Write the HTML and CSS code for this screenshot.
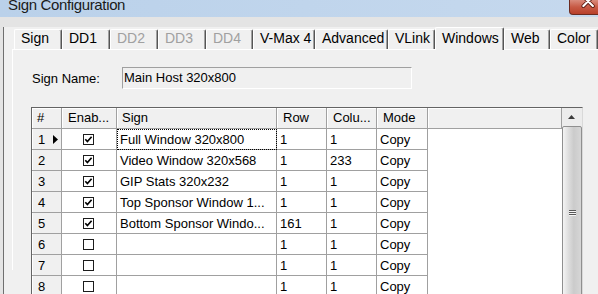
FILE: index.html
```html
<!DOCTYPE html>
<html lang="en">
<head>
    <meta charset="UTF-8">
    <title>Sign Configuration</title>
    <link rel="stylesheet" href="styles.css">
</head>
<body>
    <div class="titlebar">
        <span class="title">Sign Configuration</span>
        <span class="close">
            <svg width="43" height="15" viewBox="0 0 43 15">
                <path d="M14 -4 L24 6 M24 -4 L14 6" stroke="#5a1a10" stroke-width="4" stroke-linecap="round"/>
                <path d="M14 -4 L24 6 M24 -4 L14 6" stroke="#fff" stroke-width="2.2" stroke-linecap="round"/>
            </svg>
        </span>
    </div>

    <div class="frame">
        <div class="tabs">
            <div class="tab" style="width:48px">Sign</div>
            <div class="tab" style="width:48px">DD1</div>
            <div class="tab disabled" style="width:48px">DD2</div>
            <div class="tab disabled" style="width:48px">DD3</div>
            <div class="tab disabled" style="width:47px">DD4</div>
            <div class="tab" style="width:62px">V-Max 4</div>
            <div class="tab" style="width:73px">Advanced</div>
            <div class="tab" style="width:47px">VLink</div>
            <div class="tab selected" style="width:69px">Windows</div>
            <div class="tab" style="width:46px">Web</div>
            <div class="tab" style="width:48px">Color</div>
        </div>

        <div class="panel">
            <div class="name-row">
                <label>Sign Name:</label>
                <div class="textbox">Main Host 320x800</div>
            </div>

            <div class="grid">
                <div class="table">
                    <div class="row head">
                        <div class="cell">#</div>
                        <div class="cell">Enab...</div>
                        <div class="cell">Sign</div>
                        <div class="cell">Row</div>
                        <div class="cell">Colu...</div>
                        <div class="cell">Mode</div>
                        <div class="cell"></div>
                    </div>

                    <div class="row">
                        <div class="cell num">1<svg class="cur" width="5" height="9" viewBox="0 0 5 9"><polygon points="0,0 5,4.5 0,9" fill="#000"/></svg></div>
                        <div class="cell en"><svg class="cb" width="11" height="11" viewBox="0 0 11 11"><rect x="0.5" y="0.5" width="10" height="10" fill="#fff" stroke="#1c1c1c"/><path d="M2.3 5.2 L4.4 7.5 L8.6 2.8" fill="none" stroke="#000" stroke-width="1.7"/></svg></div>
                        <div class="cell focus">Full Window 320x800</div>
                        <div class="cell">1</div>
                        <div class="cell">1</div>
                        <div class="cell">Copy</div>
                        <div class="cell fill"></div>
                    </div>
                    <div class="row">
                        <div class="cell num">2</div>
                        <div class="cell en"><svg class="cb" width="11" height="11" viewBox="0 0 11 11"><rect x="0.5" y="0.5" width="10" height="10" fill="#fff" stroke="#1c1c1c"/><path d="M2.3 5.2 L4.4 7.5 L8.6 2.8" fill="none" stroke="#000" stroke-width="1.7"/></svg></div>
                        <div class="cell">Video Window 320x568</div>
                        <div class="cell">1</div>
                        <div class="cell">233</div>
                        <div class="cell">Copy</div>
                        <div class="cell fill"></div>
                    </div>
                    <div class="row">
                        <div class="cell num">3</div>
                        <div class="cell en"><svg class="cb" width="11" height="11" viewBox="0 0 11 11"><rect x="0.5" y="0.5" width="10" height="10" fill="#fff" stroke="#1c1c1c"/><path d="M2.3 5.2 L4.4 7.5 L8.6 2.8" fill="none" stroke="#000" stroke-width="1.7"/></svg></div>
                        <div class="cell">GIP Stats 320x232</div>
                        <div class="cell">1</div>
                        <div class="cell">1</div>
                        <div class="cell">Copy</div>
                        <div class="cell fill"></div>
                    </div>
                    <div class="row">
                        <div class="cell num">4</div>
                        <div class="cell en"><svg class="cb" width="11" height="11" viewBox="0 0 11 11"><rect x="0.5" y="0.5" width="10" height="10" fill="#fff" stroke="#1c1c1c"/><path d="M2.3 5.2 L4.4 7.5 L8.6 2.8" fill="none" stroke="#000" stroke-width="1.7"/></svg></div>
                        <div class="cell">Top Sponsor Window 1...</div>
                        <div class="cell">1</div>
                        <div class="cell">1</div>
                        <div class="cell">Copy</div>
                        <div class="cell fill"></div>
                    </div>
                    <div class="row">
                        <div class="cell num">5</div>
                        <div class="cell en"><svg class="cb" width="11" height="11" viewBox="0 0 11 11"><rect x="0.5" y="0.5" width="10" height="10" fill="#fff" stroke="#1c1c1c"/><path d="M2.3 5.2 L4.4 7.5 L8.6 2.8" fill="none" stroke="#000" stroke-width="1.7"/></svg></div>
                        <div class="cell">Bottom Sponsor Windo...</div>
                        <div class="cell">161</div>
                        <div class="cell">1</div>
                        <div class="cell">Copy</div>
                        <div class="cell fill"></div>
                    </div>
                    <div class="row">
                        <div class="cell num">6</div>
                        <div class="cell en"><svg class="cb" width="11" height="11" viewBox="0 0 11 11"><rect x="0.5" y="0.5" width="10" height="10" fill="#fff" stroke="#1c1c1c"/></svg></div>
                        <div class="cell"></div>
                        <div class="cell">1</div>
                        <div class="cell">1</div>
                        <div class="cell">Copy</div>
                        <div class="cell fill"></div>
                    </div>
                    <div class="row">
                        <div class="cell num">7</div>
                        <div class="cell en"><svg class="cb" width="11" height="11" viewBox="0 0 11 11"><rect x="0.5" y="0.5" width="10" height="10" fill="#fff" stroke="#1c1c1c"/></svg></div>
                        <div class="cell"></div>
                        <div class="cell">1</div>
                        <div class="cell">1</div>
                        <div class="cell">Copy</div>
                        <div class="cell fill"></div>
                    </div>
                    <div class="row">
                        <div class="cell num">8</div>
                        <div class="cell en"><svg class="cb" width="11" height="11" viewBox="0 0 11 11"><rect x="0.5" y="0.5" width="10" height="10" fill="#fff" stroke="#1c1c1c"/></svg></div>
                        <div class="cell"></div>
                        <div class="cell">1</div>
                        <div class="cell">1</div>
                        <div class="cell">Copy</div>
                        <div class="cell fill"></div>
                    </div>
                </div>

                <div class="scrollbar">
                    <div class="sb-up">
                        <svg width="7" height="4" viewBox="0 0 7 4"><polygon points="3.5,0 7,4 0,4" fill="#3c3c3c"/></svg>
                    </div>
                    <div class="thumb">
                        <div class="grip"></div>
                        <div class="grip"></div>
                        <div class="grip"></div>
                    </div>
                </div>
            </div>
        </div>
    </div>
</body>
</html>
```

FILE: styles.css
```css
html, body {
    margin: 0;
    padding: 0;
}
body {
    width: 598px;
    height: 294px;
    overflow: hidden;
    background: #e4e4e4;
    font-family: "Liberation Sans", Arial, sans-serif;
    font-size: 13px;
    color: #000;
}

/* title bar */
.titlebar {
    width: 612px;
    height: 17px;
    display: flex;
    align-items: flex-start;
    background: linear-gradient(to right, #bad1ea, #c6d9ee);
}
.title {
    padding-left: 8px;
    font-size: 15px;
    letter-spacing: -0.35px;
    line-height: 10px;
    color: #1a1a1a;
}
.close {
    margin-left: auto;
    width: 43px;
    height: 15px;
    box-sizing: border-box;
    border: 1px solid #6b2b20;
    border-top: none;
    border-radius: 0 0 4px 4px;
    background: linear-gradient(#d98b7c, #c75a45 50%, #b8402a);
    display: flex;
}

/* window body */
.frame {
    margin-left: 3px;
    border-left: 1px solid #6f6f6f;
    height: 277px;
    background: #f0f0f0;
}

.tabs {
    display: flex;
    align-items: flex-start;
    height: 22px;
    margin-top: 10px;
    padding-left: 10px;
}
.tab {
    box-sizing: border-box;
    height: 20px;
    margin-top: 2px;
    padding-left: 6px;
    border-top: 1px solid #fff;
    border-left: 1px solid #fff;
    border-right: 1px solid #555;
    box-shadow: inset -1px 0 #a0a0a0;
    border-radius: 2px 2px 0 0;
    font-size: 14px;
    line-height: 17px;
    white-space: nowrap;
    background: #f0f0f0;
}
.tab.disabled {
    color: #a0a0a0;
}
.tab.selected {
    position: relative;
    z-index: 1;
    height: 23px;
    margin-top: 0;
    padding-top: 2px;
}

.panel {
    margin-left: 8px;
    height: 220px;
    border-top: 1px solid #fff;
    border-left: 1px solid #fff;
    padding-left: 18px;
}

.name-row {
    display: flex;
    align-items: center;
    margin-top: 17px;
}
.name-row label {
    width: 90px;
    padding-left: 1px;
}
.textbox {
    box-sizing: border-box;
    width: 290px;
    height: 22px;
    padding-left: 1px;
    line-height: 20px;
    border: 1px solid;
    border-color: #a0a0a0 #fff #fff #a0a0a0;
    background: #f0f0f0;
}

/* data grid */
.grid {
    display: flex;
    width: 552px;
    height: 190px;
    margin-top: 18px;
    box-sizing: border-box;
    border-top: 1px solid #646464;
    border-left: 1px solid #646464;
    border-right: 1px solid #d9d9d9;
    background: #fff;
}
.table {
    width: 530px;
}
.row {
    display: grid;
    grid-template-columns: 30px 55px 160px 50px 50px 51px 134px;
}
.cell {
    box-sizing: border-box;
    height: 21px;
    padding-left: 3px;
    border-right: 1px solid #a0a0a0;
    border-bottom: 1px solid #a0a0a0;
    line-height: 21px;
    white-space: nowrap;
    overflow: hidden;
}
.cell.fill {
    border: none;
}
.head .cell {
    padding-left: 5px;
    line-height: 20px;
    background: #f0f0f0;
    box-shadow: inset 1px 1px #fff;
}
.head .cell:nth-child(2),
.head .cell:nth-child(4),
.head .cell:nth-child(5),
.head .cell:nth-child(6) {
    padding-left: 6px;
}
.cell.num {
    display: flex;
    align-items: center;
    padding-left: 6px;
    background: #f0f0f0;
    box-shadow: inset 1px 0 #fff;
}
.cur {
    margin-left: auto;
    margin-right: 3px;
}
.cell.en {
    display: flex;
    justify-content: center;
    align-items: center;
    padding: 0 1px 0 0;
}
.cell.focus {
    outline: 1px dotted #000;
    outline-offset: -1px;
}

.scrollbar {
    width: 20px;
    background: #ececec;
    display: flex;
    flex-direction: column;
}
.sb-up {
    height: 23px;
    display: flex;
    justify-content: center;
    align-items: center;
    padding-right: 1px;
}
.thumb {
    margin-top: 1px;
    height: 200px;
    box-sizing: border-box;
    border: 1px solid #8f8f8f;
    border-radius: 2px;
    background: linear-gradient(to right, #f4f4f4, #dedede 30%, #cbcbcb 60%, #d6d6d6);
    display: flex;
    flex-direction: column;
    align-items: center;
    padding-top: 83px;
    gap: 1px;
}
.grip {
    width: 7px;
    height: 1px;
    background: #585858;
    box-shadow: 0 1px #f4f4f4;
}
```
